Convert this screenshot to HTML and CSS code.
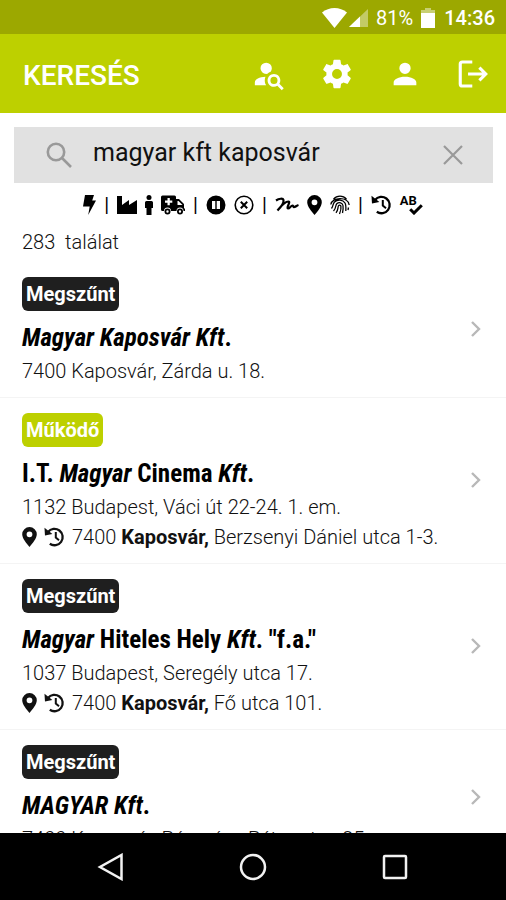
FILE: index.html
```
<!DOCTYPE html>
<html lang="hu">

<head>
    <meta charset="UTF-8">
    <meta name="viewport" content="width=device-width, initial-scale=1.0">
    <title>Keresés</title>
    <link rel="stylesheet" href="styles.css">
</head>

<body>
    <!-- shared icons -->
    <svg class="icon-defs" aria-hidden="true">
        <symbol id="icon-pin" viewBox="0 0 15 20">
            <path fill-rule="evenodd" d="M7.5 0A7.3 7.3 0 0 0 .2 7.3C.2 11.5 4.5 16.5 7.5 20c3-3.5 7.3-8.5 7.3-12.7A7.3 7.3 0 0 0 7.5 0zm0 4.4a2.9 2.9 0 1 1 0 5.8 2.9 2.9 0 0 1 0-5.8z" />
        </symbol>
        <symbol id="icon-history" viewBox="0 0 21 20">
            <path class="line" d="M4 5A8.2 8.2 0 1 1 5.8 16.8" stroke-width="2.3" />
            <path d="M.5.8 1 8.6l7.4-1.6z" />
            <path class="line" d="M11.8 5v5.6l3.2 2.6" stroke-width="2" />
        </symbol>
        <symbol id="icon-chevron" viewBox="0 0 12 18">
            <path class="line" d="M2 2l7 7-7 7" stroke-width="2.4" />
        </symbol>
    </svg>

    <div class="status-bar">
        <svg width="25" height="20" viewBox="0 0 25 20" aria-label="Wi-Fi">
            <path d="M0 4.5C7-1.5 18-1.5 25 4.5L12.5 20z" />
        </svg>
        <svg width="19" height="20" viewBox="0 0 19 20" aria-label="Térerő">
            <path d="M19 1v18H0z" opacity=".4" />
            <path d="M11 8.6V19H0z" />
        </svg>
        <span class="battery-text">81%</span>
        <svg width="14" height="20" viewBox="0 0 14 20" aria-label="Akkumulátor">
            <path d="M0 2h4V0h6v2h4v4H0z" opacity=".45" />
            <path d="M0 5h14v15H0z" />
        </svg>
        <span class="clock">14:36</span>
    </div>

    <header class="app-header">
        <h1>KERESÉS</h1>
        <nav class="header-actions">
            <button type="button" aria-label="Személy keresése">
                <svg viewBox="0 0 24 24"><path d="M15.5,12C18,12 20,14 20,16.5C20,17.38 19.75,18.21 19.31,18.9L22.39,22L21,23.39L17.88,20.32C17.19,20.75 16.37,21 15.5,21C13,21 11,19 11,16.5C11,14 13,12 15.5,12M15.5,14A2.5,2.5 0 0,0 13,16.5A2.5,2.5 0 0,0 15.5,19A2.5,2.5 0 0,0 18,16.5A2.5,2.5 0 0,0 15.5,14M10,4A4,4 0 0,1 14,8C14,8.91 13.69,9.75 13.18,10.43C12.32,10.75 11.55,11.26 10.91,11.9L10,12A4,4 0 0,1 6,8A4,4 0 0,1 10,4M2,20V18C2,15.88 5.31,14.14 9.5,14C9.18,14.78 9,15.62 9,16.5C9,17.79 9.38,19 10,20H2Z" /></svg>
            </button>
            <button type="button" aria-label="Beállítások">
                <svg viewBox="0 0 24 24"><path d="M12,15.5A3.5,3.5 0 0,1 8.5,12A3.5,3.5 0 0,1 12,8.5A3.5,3.5 0 0,1 15.5,12A3.5,3.5 0 0,1 12,15.5M19.43,12.97C19.47,12.65 19.5,12.33 19.5,12C19.5,11.67 19.47,11.34 19.43,11L21.54,9.37C21.73,9.22 21.78,8.95 21.66,8.73L19.66,5.27C19.54,5.05 19.27,4.96 19.05,5.05L16.56,6.05C16.04,5.66 15.5,5.32 14.87,5.07L14.5,2.42C14.46,2.18 14.25,2 14,2H10C9.75,2 9.54,2.18 9.5,2.42L9.13,5.07C8.5,5.32 7.96,5.66 7.44,6.05L4.95,5.05C4.73,4.96 4.46,5.05 4.34,5.27L2.34,8.73C2.21,8.95 2.27,9.22 2.46,9.37L4.57,11C4.53,11.34 4.5,11.67 4.5,12C4.5,12.33 4.53,12.65 4.57,12.97L2.46,14.63C2.27,14.78 2.21,15.05 2.34,15.27L4.34,18.73C4.46,18.95 4.73,19.03 4.95,18.95L7.44,17.94C7.96,18.34 8.5,18.68 9.13,18.93L9.5,21.58C9.54,21.82 9.75,22 10,22H14C14.25,22 14.46,21.82 14.5,21.58L14.87,18.93C15.5,18.67 16.04,18.34 16.56,17.94L19.05,18.95C19.27,19.03 19.54,18.95 19.66,18.73L21.66,15.27C21.78,15.05 21.73,14.78 21.54,14.63L19.43,12.97Z" /></svg>
            </button>
            <button type="button" aria-label="Profil">
                <svg viewBox="0 0 24 24"><path d="M12,4A4,4 0 0,1 16,8A4,4 0 0,1 12,12A4,4 0 0,1 8,8A4,4 0 0,1 12,4M12,14C16.42,14 20,15.79 20,18V20H4V18C4,15.79 7.58,14 12,14Z" /></svg>
            </button>
            <button type="button" aria-label="Kijelentkezés">
                <svg viewBox="0 0 24 24"><path class="line" d="M11.5 3.5h-7A1.5 1.5 0 0 0 3 5v14a1.500 1.500 0 0 0 1.500 1.500h7M8.500 12h12M16.500 7.500 21 12l-4.500 4.500" stroke-width="2.200" /></svg>
            </button>
        </nav>
    </header>

    <main class="content">
        <form class="search-box" role="search">
            <svg class="search-icon" viewBox="0 0 26 26" aria-hidden="true">
                <path class="line" d="M10 1.8a8.2 8.2 0 1 0 0 16.4 8.2 8.2 0 0 0 0-16.4M16 16l9 9" stroke-width="2.6" />
            </svg>
            <input type="text" aria-label="Keresés" value="magyar kft kaposvár">
            <button type="button" aria-label="Törlés">
                <svg width="20" height="20" viewBox="0 0 20 20"><path class="line" d="M1 1l18 18M19 1 1 19" stroke-width="2.2" /></svg>
            </button>
        </form>

        <div class="filters">
            <button type="button" aria-label="Gyors">
                <svg width="13" height="20" viewBox="0 0 13 20"><path d="M2 0h9L9.200 5.500H13L5.200 20l1.500-8.500H0z" /></svg>
            </button>
            <span>|</span>
            <button type="button" aria-label="Cég">
                <svg width="20" height="20" viewBox="0 0 20 20"><path d="M0 1h5v9l7-5v5l8-5v14H0z" /></svg>
            </button>
            <button type="button" aria-label="Magánszemély">
                <svg width="8" height="20" viewBox="0 0 8 20"><circle cx="4" cy="2.5" r="2.5" /><path d="M1.5 6h5A1.5 1.5 0 0 1 8 7.5V13H6.500v7h-5v-7H0V7.500A1.500 1.500 0 0 1 1.500 6z" /></svg>
            </button>
            <button type="button" aria-label="Egészségügy">
                <svg width="24" height="20" viewBox="0 0 24 20">
                    <path fill-rule="evenodd" d="M1.5.5h12A1.5 1.5 0 0 1 15 2v2h3l5 5v4.500h1V16h-1.500a3.500 3.500 0 0 0-7 0H10a3.500 3.500 0 0 0-7 0H1.500A1.500 1.500 0 0 1 0 14.500V2A1.500 1.500 0 0 1 1.500.5zM6.500 3v2.500H4v2.300h2.500v2.500h2.300V7.800h2.500V5.500H8.800V3zM16.500 6v4h5l-4-4z" />
                    <path fill-rule="evenodd" d="M6.500 13.500a3 3 0 1 1 0 6 3 3 0 0 1 0-6zm0 1.800a1.200 1.200 0 1 0 0 2.400 1.200 1.200 0 0 0 0-2.400zM19 13.500a3 3 0 1 1 0 6 3 3 0 0 1 0-6zm0 1.800a1.200 1.200 0 1 0 0 2.400 1.200 1.200 0 0 0 0-2.400z" />
                </svg>
            </button>
            <span>|</span>
            <button type="button" aria-label="Felfüggesztett">
                <svg width="20" height="20" viewBox="0 0 20 20"><path fill-rule="evenodd" d="M10 .5a9.500 9.500 0 1 1 0 19 9.500 9.500 0 0 1 0-19zM6 6v8h3.300V6zm4.700 0v8H14V6z" /></svg>
            </button>
            <button type="button" aria-label="Megszűnt">
                <svg width="20" height="20" viewBox="0 0 20 20"><circle class="line" cx="10" cy="10" r="8.8" stroke-width="1.600" /><path class="line" d="M6.800 6.800l6.400 6.400M13.200 6.800l-6.400 6.400" stroke-width="2" /></svg>
            </button>
            <span>|</span>
            <button type="button" aria-label="Aláírás">
                <svg width="24" height="20" viewBox="0 0 24 20"><path class="line" d="M1 5.500C4 3.500 8 3 8.500 5 9 7.500 5.500 12.500 2.500 15.500 6 11 11 6.500 13.500 6.500c2.500 0-2.500 6.500-.5 7 1.500.3 3-3 4.500-3 1 0 .5 2 2 1.500s2.500-1.500 4-2" stroke-width="2.200" /></svg>
            </button>
            <button type="button" aria-label="Cím">
                <svg width="15" height="20"><use href="#icon-pin" /></svg>
            </button>
            <button type="button" aria-label="Azonosító">
                <svg width="20" height="20" viewBox="0 0 20 20">
                    <path class="line" d="M3.500 4.200C7 .2 13 .2 16.500 4.200M.8 9.500C2 2 18 1 19.200 10M1.500 13.500C3.500 11 2.500 9 4.500 7c3-3 8.500-2.500 10.500 1 1.200 2 1 5 .8 8M3.500 16c3-3 1.500-5.500 3.500-7.500 2-1.800 5.500-.8 6 2 .4 2.500 0 5-.5 7.500M6 17.800c2.500-3 1.500-5 2.500-7 .5-1 2-1 2.400.2.500 2.500-.4 5.500-1.400 8M18.500 12.500l-.5 2.500" stroke-width="1.300" />
                </svg>
            </button>
            <span>|</span>
            <button type="button" aria-label="Előzmények">
                <svg width="21" height="20"><use href="#icon-history" /></svg>
            </button>
            <button type="button" class="spellcheck" aria-label="Helyesírás">
                <span>AB</span>
                <svg width="14" height="11" viewBox="0 0 14 11"><path class="line" d="M1.200 5.200 5 9l7.800-7.800" stroke-width="3" /></svg>
            </button>
        </div>

        <p class="result-count">283&nbsp; találat</p>

        <ul class="results">
            <li>
                <a href="#" class="result">
                    <div class="result-body">
                        <span class="badge">Megszűnt</span>
                        <h2><em>Magyar</em> <em>Kaposvár</em> <em>Kft</em>.</h2>
                        <p>7400 Kaposvár, Zárda u. 18.</p>
                    </div>
                    <svg class="chevron"><use href="#icon-chevron" /></svg>
                </a>
            </li>
            <li>
                <a href="#" class="result">
                    <div class="result-body">
                        <span class="badge badge-active">Működő</span>
                        <h2>I.T. <em>Magyar</em> Cinema <em>Kft</em>.</h2>
                        <p>1132 Budapest, Váci út 22-24. 1. em.</p>
                        <p class="site">
                            <svg width="15" height="20"><use href="#icon-pin" /></svg>
                            <svg width="21" height="20"><use href="#icon-history" /></svg>
                            <span>7400 <strong>Kaposvár,</strong> Berzsenyi Dániel utca 1-3.</span>
                        </p>
                    </div>
                    <svg class="chevron"><use href="#icon-chevron" /></svg>
                </a>
            </li>
            <li>
                <a href="#" class="result">
                    <div class="result-body">
                        <span class="badge">Megszűnt</span>
                        <h2><em>Magyar</em> Hiteles Hely <em>Kft</em>. "f.a."</h2>
                        <p>1037 Budapest, Seregély utca 17.</p>
                        <p class="site">
                            <svg width="15" height="20"><use href="#icon-pin" /></svg>
                            <svg width="21" height="20"><use href="#icon-history" /></svg>
                            <span>7400 <strong>Kaposvár,</strong> Fő utca 101.</span>
                        </p>
                    </div>
                    <svg class="chevron"><use href="#icon-chevron" /></svg>
                </a>
            </li>
            <li>
                <a href="#" class="result">
                    <div class="result-body">
                        <span class="badge">Megszűnt</span>
                        <h2><em>MAGYAR</em> <em>Kft</em>.</h2>
                        <p>7400 Kaposvár, Pázmány Péter utca 25.</p>
                    </div>
                    <svg class="chevron"><use href="#icon-chevron" /></svg>
                </a>
            </li>
        </ul>
    </main>

    <footer class="nav-bar">
        <button type="button" aria-label="Vissza">
            <svg width="28" height="28" viewBox="0 0 28 28"><path class="line" d="M24.500 2v24L3 14z" stroke-width="2.500" /></svg>
        </button>
        <button type="button" aria-label="Kezdőképernyő">
            <svg width="28" height="28" viewBox="0 0 28 28"><circle class="line" cx="14" cy="14" r="12" stroke-width="2.500" /></svg>
        </button>
        <button type="button" aria-label="Legutóbbiak">
            <svg width="28" height="28" viewBox="0 0 28 28"><rect class="line" x="3" y="3" width="22" height="22" rx="1" stroke-width="2.500" /></svg>
        </button>
    </footer>
</body>

</html>
```

FILE: styles.css
```
* {
    box-sizing: border-box;
}

body {
    font-family: Roboto, "Liberation Sans", sans-serif;
    margin: 0;
    height: 100vh;
    display: flex;
    flex-direction: column;
    background: #fff;
    color: #111;
}

button {
    display: flex;
    align-items: center;
    justify-content: center;
    padding: 0;
    border: none;
    background: none;
    color: inherit;
    font: inherit;
    cursor: pointer;
}

svg {
    display: block;
    flex-shrink: 0;
    fill: currentColor;
}

.line {
    fill: none;
    stroke: currentColor;
}

h1,
h2,
p,
ul {
    margin: 0;
    padding: 0;
}

.icon-defs {
    display: none;
}

.status-bar {
    display: flex;
    align-items: center;
    justify-content: flex-end;
    flex-shrink: 0;
    height: 34px;
    padding: 2px 11px 0;
    background: #9ca800;
    color: #fff;
    font-size: 20px;
}

.battery-text {
    margin: 0 8px;
}

.status-bar svg + svg {
    margin-left: 2px;
}

.clock {
    margin-left: 9px;
    font-weight: 500;
}

.app-header {
    display: flex;
    align-items: center;
    justify-content: space-between;
    flex-shrink: 0;
    height: 79px;
    padding: 0 16px 0 23px;
    background: #bdd000;
    color: #fff;
}

.app-header h1 {
    font-size: 28px;
    font-weight: 500;
    padding-top: 3px;
}

.header-actions {
    display: flex;
    gap: 34px;
}

.header-actions svg {
    width: 34px;
    height: 34px;
}

.content {
    flex: 1;
    min-height: 0;
    overflow: hidden;
}

.search-box {
    display: flex;
    align-items: center;
    height: 56px;
    margin: 14px 13px 0 14px;
    padding: 0 30px 0 32px;
    background: #e1e1e1;
    color: #999;
}

.search-icon {
    width: 26px;
    height: 26px;
}

.search-box input {
    flex: 1;
    min-width: 0;
    padding: 0 0 6px;
    margin: 0 16px 0 21px;
    border: none;
    outline: none;
    background: none;
    color: #111;
    font-family: inherit;
    font-size: 25px;
}

.filters {
    display: flex;
    align-items: center;
    justify-content: center;
    gap: 8px;
    height: 44px;
    color: #000;
    font-size: 20px;
}

.spellcheck {
    flex-direction: column;
    align-items: flex-start;
    width: 23px;
    font-size: 13px;
    font-weight: 700;
    line-height: 11px;
}

.spellcheck svg {
    align-self: flex-end;
    margin-top: -2px;
}

.result-count {
    padding: 0 22px;
    font-size: 20px;
    line-height: 30px;
    font-weight: 300;
}

.results {
    list-style: none;
    padding-top: 5px;
}

.result {
    display: flex;
    align-items: center;
    justify-content: space-between;
    padding: 15px 24px 11px 22px;
    border-bottom: 1px solid #f4f4f4;
    color: inherit;
    text-decoration: none;
}

.badge {
    display: block;
    width: fit-content;
    padding: 0 4px;
    border-radius: 6px;
    background: #1f1f1f;
    color: #fff;
    font-size: 20px;
    font-weight: 700;
    line-height: 34px;
}

.badge-active {
    background: #bdd000;
}

.result h2 {
    margin-top: 9px;
    color: #000;
    font-family: "Roboto Condensed", Roboto, sans-serif;
    font-size: 25px;
    font-weight: 700;
    line-height: 36px;
}

.result p {
    font-size: 20px;
    font-weight: 300;
    line-height: 30px;
}

.result strong {
    font-weight: 700;
}

.result .site {
    display: flex;
    align-items: center;
    gap: 7px;
}

.chevron {
    width: 12px;
    height: 18px;
    margin-bottom: 6px;
    color: #b8b8b8;
}

.nav-bar {
    display: flex;
    flex-shrink: 0;
    height: 67px;
    padding: 0 8%;
    background: #000;
    color: #f2f2f2;
}

.nav-bar button {
    flex: 1;
}
```
